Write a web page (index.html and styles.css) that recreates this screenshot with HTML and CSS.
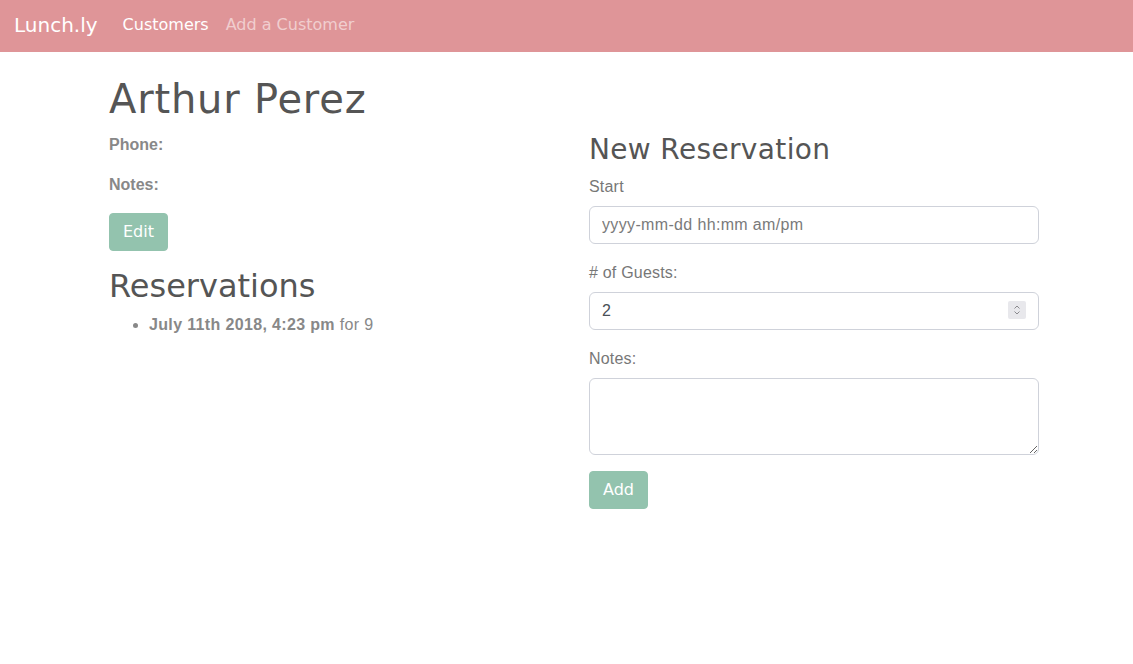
FILE: index.html
```html
<!DOCTYPE html>
<html lang="en">
<head>
<meta charset="utf-8">
<title>Lunch.ly</title>
<link rel="stylesheet" href="styles.css">
</head>
<body>
<nav class="navbar">
  <a class="brand" href="#">Lunch.ly</a>
  <a class="nav-link active" href="#">Customers</a>
  <a class="nav-link" href="#">Add a Customer</a>
</nav>
<main class="container">
  <h1 class="title">Arthur Perez</h1>
  <div class="row">
    <section class="col">
      <p class="field"><b>Phone:</b></p>
      <p class="field"><b>Notes:</b></p>
      <div class="edit-form"><button class="btn" type="button">Edit</button></div>
      <h2 class="subtitle">Reservations</h2>
      <ul class="res-list">
        <li><b>July 11th 2018, 4:23 pm</b> for 9</li>
      </ul>
    </section>
    <section class="col">
      <h3 class="form-title">New Reservation</h3>
      <div class="form-group">
        <label class="label">Start</label>
        <input class="input" type="text" placeholder="yyyy-mm-dd hh:mm am/pm">
      </div>
      <div class="form-group">
        <label class="label"># of Guests:</label>
        <div class="number-wrap">
          <input class="input" type="text" value="2">
          <span class="spinner"><svg width="8" height="12" viewBox="0 0 8 12"><path d="M1.5 4.5 L4 2 L6.5 4.5 M1.5 7.5 L4 10 L6.5 7.5" fill="none" stroke="#8a8a8e" stroke-width="1"/></svg></span>
        </div>
      </div>
      <div class="form-group form-group-last">
        <label class="label">Notes:</label>
        <textarea class="input textarea"></textarea>
      </div>
      <button class="btn" type="button">Add</button>
    </section>
  </div>
</main>
</body>
</html>
```
FILE: styles.css
```css
html, body {
  margin: 0;
  padding: 0;
  background: #fff;
}
body {
  font-family: "Liberation Sans", Arial, sans-serif;
  font-size: 16px;
  line-height: 24px;
  color: #888;
}
.navbar {
  display: flex;
  align-items: center;
  box-sizing: border-box;
  height: 52px;
  padding: 0 14px 2px;
  background: #df9598;
  font-family: "DejaVu Sans", sans-serif;
}
.brand {
  color: #fff;
  font-size: 20px;
  text-decoration: none;
  margin-right: 25px;
}
.nav-link {
  color: rgba(255, 255, 255, 0.55);
  font-size: 16px;
  text-decoration: none;
  margin-right: 17px;
}
.nav-link.active {
  color: #fff;
}
.container {
  width: 930px;
  margin: 23px 0 0 109px;
}
.title {
  font-family: "DejaVu Sans", sans-serif;
  font-weight: normal;
  font-size: 40px;
  line-height: 48px;
  letter-spacing: 0.8px;
  color: #555;
  margin: 0 0 10px;
}
.row {
  display: grid;
  grid-template-columns: 450px 450px;
  column-gap: 30px;
}
.field {
  margin: 0 0 16px;
}
.edit-form {
  margin-bottom: 16px;
}
.btn {
  display: inline-block;
  font-family: "DejaVu Sans", sans-serif;
  font-size: 16px;
  line-height: 24px;
  padding: 6px 13px;
  border: 1px solid #93c3ae;
  border-radius: 4px;
  background: #93c3ae;
  color: #fff;
}
.subtitle {
  font-family: "DejaVu Sans", sans-serif;
  font-weight: normal;
  font-size: 32px;
  line-height: 38px;
  color: #555;
  margin: 0 0 8px;
}
.res-list {
  margin: 0;
  padding-left: 40px;
  letter-spacing: 0.35px;
}
.form-title {
  font-family: "DejaVu Sans", sans-serif;
  font-weight: normal;
  font-size: 28px;
  line-height: 34px;
  letter-spacing: 0.35px;
  color: #555;
  margin: 0 0 8px;
}
.form-group {
  margin-bottom: 17px;
}
.form-group-last {
  margin-bottom: 16px;
}
.label {
  display: block;
  margin-bottom: 7px;
  color: #777;
  letter-spacing: 0.2px;
}
.input {
  display: block;
  box-sizing: border-box;
  width: 100%;
  height: 38px;
  padding: 6px 12px;
  font-family: "Liberation Sans", Arial, sans-serif;
  font-size: 16px;
  line-height: 24px;
  letter-spacing: 0.35px;
  color: #495057;
  background: #fff;
  border: 1px solid #cfd2da;
  border-radius: 6px;
  outline: none;
}
.input::placeholder {
  color: #7a7a7a;
}
.number-wrap {
  position: relative;
}
.spinner {
  position: absolute;
  right: 13px;
  top: 9px;
  width: 18px;
  height: 18px;
  background: #e8e8ec;
  border-radius: 2px;
  display: flex;
  align-items: center;
  justify-content: center;
}
.textarea {
  height: 77px;
  resize: vertical;
}
```
